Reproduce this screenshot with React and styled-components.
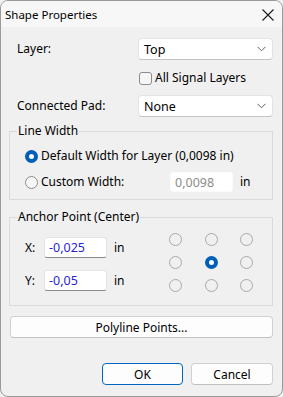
import React from 'react';
import styled, { createGlobalStyle } from 'styled-components';

const Global = createGlobalStyle`
  html, body { margin: 0; padding: 0; background: #f0f0f0; }
  * { box-sizing: border-box; }
`;

const Window = styled.div`
  width: 283px;
  height: 397px;
  border: 1px solid #9a9a9a;
  border-radius: 8px;
  overflow: hidden;
  background: #f0f0f0;
  font-family: 'Noto Sans', 'Open Sans', sans-serif;
  font-size: 12px;
  color: #000;
  display: flex;
  flex-direction: column;
`;

const TitleBar = styled.div`
  height: 26px;
  flex: none;
  background: #f7f7f7;
  display: flex;
  align-items: center;
  justify-content: space-between;
  padding: 0 8px 0 4px;
`;

const Title = styled.span`
  font-size: 11.5px;
  line-height: 16px;
  margin-top: 2px;
`;

const Body = styled.div`
  padding: 0 9px 0 8px;
  display: flex;
  flex-direction: column;
`;

const Row = styled.div`
  display: flex;
  align-items: center;
  height: ${p => p.h || 22}px;
  margin-top: ${p => p.mt || 0}px;
  padding-left: ${p => p.pl || 0}px;
`;

const Label = styled.span`
  width: ${p => p.w}px;
  flex: none;
  line-height: 16px;
`;

const Combo = styled.div`
  flex: 1;
  height: 22px;
  background: #fff;
  border: 1px solid #e3e3e3;
  border-bottom-color: #c4c4c4;
  border-radius: 4px;
  display: flex;
  align-items: center;
  justify-content: space-between;
  padding: 0 6px 0 5px;
  font-size: 12.5px;
`;

const CheckBox = styled.span`
  width: 13px;
  height: 13px;
  border: 1px solid #8c8c8c;
  border-radius: 3px;
  background: #f6f6f6;
  margin-right: 3px;
  flex: none;
`;

const Group = styled.fieldset`
  margin: ${p => p.mt || 0}px 0 0 0;
  padding: 0 0 0 7px;
  border: 1px solid #dadada;
  border-radius: 0;
  min-width: 0;
`;

const Legend = styled.legend`
  padding: 0 1px;
  line-height: 16px;
  font-size: 12px;
`;

const Radio = styled.span`
  width: 13px;
  height: 13px;
  flex: none;
  border-radius: 50%;
  border: 1px solid ${p => (p.light ? '#a8a8a8' : '#8c8c8c')};
  background: ${p => (p.on ? '#fff' : p.light ? 'transparent' : '#f6f6f6')};
  ${p => p.on && `border-width: 4px; border-color: #005fb8;`}
`;

const Text = styled.span`
  line-height: 16px;
  margin-left: ${p => p.ml || 0}px;
  width: ${p => (p.w ? `${p.w}px` : 'auto')};
  flex: none;
  white-space: nowrap;
`;

const Field = styled.div`
  width: 63px;
  height: ${p => p.h || 21}px;
  flex: none;
  background: #fff;
  border-radius: 3px;
  border: 1px solid ${p => (p.disabled ? '#fbfbfb' : '#e5e5e5')};
  border-bottom-color: ${p => (p.disabled ? '#fbfbfb' : '#8a8a8a')};
  display: flex;
  align-items: center;
  padding-left: 4px;
  color: ${p => (p.disabled ? '#8c8c8c' : '#2a1fd8')};
  font-size: 12.5px;
`;

const Anchor = styled.div`
  display: flex;
  height: 80px;
`;

const Coords = styled.div`
  display: flex;
  flex-direction: column;
  gap: 12px;
  padding: 12px 0 0 8px;
  width: 152px;
`;

const Grid = styled.div`
  display: grid;
  grid-template-columns: repeat(3, 13px);
  grid-auto-rows: 13px;
  column-gap: 22.5px;
  row-gap: 10px;
  padding-top: 8px;
`;

const Button = styled.div`
  height: 22px;
  width: ${p => (p.w ? `${p.w}px` : 'auto')};
  background: #fdfdfd;
  border: 1px solid ${p => (p.primary ? '#0067c0' : '#d0d0d0')};
  border-bottom-color: ${p => (p.primary ? '#0067c0' : '#c0c0c0')};
  border-radius: 4px;
  display: flex;
  align-items: center;
  justify-content: center;
  font-size: 12px;
  margin-top: ${p => p.mt || 0}px;
  margin-left: ${p => p.ml || 0}px;
`;

const Footer = styled.div`
  display: flex;
  justify-content: flex-end;
  margin-top: 25px;
`;

const Chevron = () => (
  <svg width="9" height="6" viewBox="0 0 9 6">
    <path d="M0.5 0.8 L4.5 4.8 L8.5 0.8" fill="none" stroke="#606060" strokeWidth="1" />
  </svg>
);

const CloseIcon = () => (
  <svg width="12" height="12" viewBox="0 0 12 12" style={{ marginTop: 2 }}>
    <path d="M0.5 0.5 L11.5 11.5 M11.5 0.5 L0.5 11.5" stroke="#1a1a1a" strokeWidth="1.1" />
  </svg>
);

const anchors = [0, 0, 0, 0, 1, 0, 0, 0, 0];

export default function App() {
  return (
    <>
      <Global />
      <Window>
        <TitleBar>
          <Title>Shape Properties</Title>
          <CloseIcon />
        </TitleBar>
        <Body>
          <Row mt={11} pl={8}>
            <Label w={121}>Layer:</Label>
            <Combo>
              <span>Top</span>
              <Chevron />
            </Combo>
          </Row>
          <Row mt={11} h={14} pl={130}>
            <CheckBox />
            <Text>All Signal Layers</Text>
          </Row>
          <Row mt={10} pl={8}>
            <Label w={121}>Connected Pad:</Label>
            <Combo>
              <span>None</span>
              <Chevron />
            </Combo>
          </Row>

          <Group mt={6}>
            <Legend>Line Width</Legend>
            <Row mt={7} h={20} pl={8}>
              <Radio on />
              <Text ml={3}>Default Width for Layer (0,0098 in)</Text>
            </Row>
            <Row mt={6} h={20} pl={8}>
              <Radio />
              <Text ml={3} w={129}>Custom Width:</Text>
              <Field disabled h={20}>0,0098</Field>
              <Text ml={7}>in</Text>
            </Row>
            <div style={{ height: 7 }} />
          </Group>

          <Group mt={9}>
            <Legend>Anchor Point (Center)</Legend>
            <Anchor>
              <Coords>
                <Row h={21}>
                  <Label w={19}>X:</Label>
                  <Field>-0,025</Field>
                  <Text ml={7}>in</Text>
                </Row>
                <Row h={21}>
                  <Label w={19}>Y:</Label>
                  <Field>-0,05</Field>
                  <Text ml={7}>in</Text>
                </Row>
              </Coords>
              <Grid>
                {anchors.map((a, i) => (
                  <Radio key={i} on={!!a} light />
                ))}
              </Grid>
            </Anchor>
          </Group>

          <Button mt={10} ml={1}>Polyline Points...</Button>

          <Footer>
            <Button primary w={81}>OK</Button>
            <Button w={82} ml={8}>Cancel</Button>
          </Footer>
        </Body>
      </Window>
    </>
  );
}
